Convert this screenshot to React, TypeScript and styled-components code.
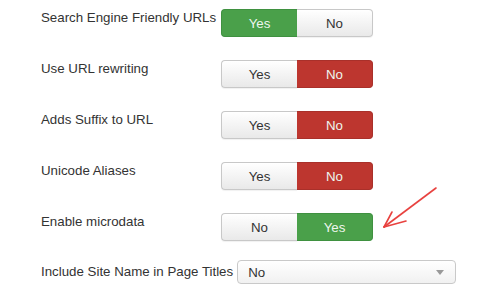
import React from "react";
import styled, { createGlobalStyle } from "styled-components";

const Global = createGlobalStyle`
  html, body { margin: 0; padding: 0; background: #ffffff; }
  body { font-family: "Liberation Sans", Arial, sans-serif; font-size: 13px; color: #333; }
`;

const Page = styled.div`
  position: relative;
  width: 490px;
  height: 308px;
  padding: 9px 0 0 41px;
  box-sizing: border-box;
  overflow: hidden;
`;

const Row = styled.div<{ $center?: boolean; $gap: number }>`
  display: flex;
  align-items: ${(p) => (p.$center ? "center" : "flex-start")};
  margin-bottom: ${(p) => p.$gap}px;
`;

const Label = styled.div`
  min-width: 176px;
  margin-right: 4px;
  line-height: 18px;
  font-size: 13.3px;
  color: #333;
  white-space: nowrap;
`;

const Group = styled.div`
  display: flex;
  width: 152px;
  height: 28px;
`;

type Tone = "off" | "green" | "red";

const Seg = styled.div<{ $tone: Tone; $first?: boolean }>`
  flex: 1;
  display: flex;
  align-items: center;
  justify-content: center;
  font-size: 13.3px;
  box-sizing: border-box;
  border: 1px solid
    ${(p) => (p.$tone === "green" ? "#3f9140" : p.$tone === "red" ? "#a9302a" : "#c8c8c8")};
  ${(p) => (p.$first ? "border-right: none;" : "border-left: none;")}
  border-radius: ${(p) => (p.$first ? "4px 0 0 4px" : "0 4px 4px 0")};
  background: ${(p) =>
    p.$tone === "green"
      ? "#4aa04a"
      : p.$tone === "red"
      ? "#bd362f"
      : "linear-gradient(#ffffff, #e9e9e9)"};
  color: ${(p) => (p.$tone === "off" ? "#333" : "#eef6ee")};
  box-shadow: ${(p) => (p.$tone === "off" ? "inset 0 1px 0 rgba(255,255,255,.6), 0 1px 1px rgba(0,0,0,.06)" : "none")};
`;

const Select = styled.div`
  width: 219px;
  height: 24px;
  box-sizing: border-box;
  border: 1px solid #c9c9c9;
  border-radius: 4px;
  background: linear-gradient(#ffffff, #f1f1f1);
  display: flex;
  align-items: center;
  justify-content: space-between;
  padding: 0 11px 0 10px;
  font-size: 13.3px;
  color: #333;
`;

const Caret = styled.span`
  width: 0;
  height: 0;
  border-left: 4px solid transparent;
  border-right: 4px solid transparent;
  border-top: 5px solid #999;
`;

const Arrow = styled.svg`
  position: absolute;
  left: 376px;
  top: 180px;
`;

type Opt = { text: string; tone: Tone };

const Toggle: React.FC<{ a: Opt; b: Opt }> = ({ a, b }) => (
  <Group>
    <Seg $tone={a.tone} $first>{a.text}</Seg>
    <Seg $tone={b.tone}>{b.text}</Seg>
  </Group>
);

const rows: { label: string; a: Opt; b: Opt }[] = [
  { label: "Search Engine Friendly URLs", a: { text: "Yes", tone: "green" }, b: { text: "No", tone: "off" } },
  { label: "Use URL rewriting", a: { text: "Yes", tone: "off" }, b: { text: "No", tone: "red" } },
  { label: "Adds Suffix to URL", a: { text: "Yes", tone: "off" }, b: { text: "No", tone: "red" } },
  { label: "Unicode Aliases", a: { text: "Yes", tone: "off" }, b: { text: "No", tone: "red" } },
  { label: "Enable microdata", a: { text: "No", tone: "off" }, b: { text: "Yes", tone: "green" } },
];

export default function App() {
  return (
    <>
      <Global />
      <Page>
        {rows.map((r, i) => (
          <Row key={r.label} $gap={i === rows.length - 1 ? 19 : 23}>
            <Label>{r.label}</Label>
            <Toggle a={r.a} b={r.b} />
          </Row>
        ))}
        <Row $center $gap={0}>
          <Label>Include Site Name in Page Titles</Label>
          <Select>
            <span>No</span>
            <Caret />
          </Select>
        </Row>
        <Arrow width="70" height="60" viewBox="0 0 70 60">
          <g fill="none" stroke="#e8423f" strokeWidth="1.6" strokeLinecap="round">
            <path d="M60 8 L8 47" />
            <path d="M8 47 L16 32" />
            <path d="M8 47 L30 41" />
          </g>
        </Arrow>
      </Page>
    </>
  );
}
